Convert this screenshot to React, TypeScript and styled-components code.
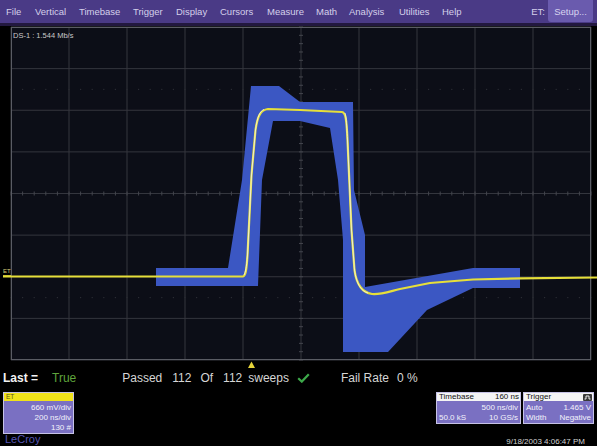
import styled, { createGlobalStyle } from "styled-components";

const GlobalStyle = createGlobalStyle`
  html, body {
    margin: 0;
    padding: 0;
    background: #000;
  }
  body {
    font-family: "Liberation Sans", Arial, sans-serif;
  }
`;

const menuItems = [
  { txt: "File", w: 29 },
  { txt: "Vertical", w: 44 },
  { txt: "Timebase", w: 54 },
  { txt: "Trigger", w: 43 },
  { txt: "Display", w: 44 },
  { txt: "Cursors", w: 47 },
  { txt: "Measure", w: 49 },
  { txt: "Math", w: 33 },
  { txt: "Analysis", w: 50 },
  { txt: "Utilities", w: 43 },
  { txt: "Help", w: 40 },
];

// grid geometry in screen coordinates
const GX0 = 11;
const GX1 = 591;
const GY0 = 27;
const GY1 = 360;
const DX = (GX1 - GX0) / 10;
const DY = (GY1 - GY0) / 8;
const CX = GX0 + DX * 5;
const CY = GY0 + DY * 4;

const MASK =
  "M156,268 L228,268 L242,180 L251,86 L279,86 L300,102 L353,102 L354,190 L365,235 L365,287 " +
  "L473,268 L520,268 L520,288 L473,288 L427,310 L388,352 L343,352 L343,240 L338,180 L330,128 " +
  "L300,121 L273,121 L262,180 L258,286 L156,286 Z";

const TRACE =
  "M3,276.5 L243,276.3 C245.5,276 246.5,271 247.5,255 L251.5,175 L255.5,130 " +
  "C257.5,116 260.5,110 268,109 L300,110 L342,112 C345.5,112.5 346.5,118 347.5,140 " +
  "L351.5,230 L354.5,270 C356.5,285 362,292.5 372,294 C379,295 386,292.5 400,289 " +
  "L430,283 L473,279.5 L520,278.3 L597,277.5";

const EDGES =
  "M244,275 C245.5,272 246.5,268 247.5,255 L251.5,175 L255.5,130 C257.5,116 260,111 264,109.5 " +
  "M345,113 C346,116 346.5,121 347.5,140 L351.5,230 L354.5,270 C356.5,284 361,291 368,293";

function Scope() {
  const vLines = Array.from({ length: 11 }, (_, i) => GX0 + DX * i);
  const hLines = Array.from({ length: 9 }, (_, i) => GY0 + DY * i);
  const xTicks = Array.from({ length: 51 }, (_, i) => GX0 + (DX / 5) * i);
  const yTicks = Array.from({ length: 41 }, (_, i) => GY0 + (DY / 5) * i);
  const dotRows = [GY0 + DY * 1.5, GY0 + DY * 6.5];
  return (
    <ScopeSvg viewBox="0 26 597 344" width={597} height={344}>
      <rect x={GX0} y={GY0} width={GX1 - GX0} height={GY1 - GY0} fill="#0c0e17" />
      {vLines.map((x) => (
        <line key={`v${x}`} x1={x} y1={GY0} x2={x} y2={GY1} stroke="#34363e" strokeWidth={1} />
      ))}
      {hLines.map((y) => (
        <line key={`h${y}`} x1={GX0} y1={y} x2={GX1} y2={y} stroke="#34363e" strokeWidth={1} />
      ))}
      {dotRows.map((y) =>
        xTicks.map((x) => (
          <rect key={`d${y}-${x}`} x={x - 0.6} y={y - 0.6} width={1.2} height={1.2} fill="#2a2c33" />
        ))
      )}
      {xTicks.map((x) => (
        <line key={`tx${x}`} x1={x} y1={CY - 2} x2={x} y2={CY + 2} stroke="#44464e" />
      ))}
      {yTicks.map((y) => (
        <line key={`ty${y}`} x1={CX - 2} y1={y} x2={CX + 2} y2={y} stroke="#44464e" />
      ))}
      <rect
        x={GX0 + 0.5}
        y={GY0 + 0.5}
        width={GX1 - GX0 - 1}
        height={GY1 - GY0 - 1}
        fill="none"
        stroke="#5a5c64"
      />
      <path d={MASK} fill="#3b57c3" />
      <path d={TRACE} fill="none" stroke="#e6df3a" strokeWidth={2.2} strokeLinejoin="round" />
      <path d={EDGES} fill="none" stroke="#f4f2e0" strokeWidth={0.9} />
      <text x={3} y={273} fontSize={6} fill="#d9cf7a" fontFamily="Liberation Sans, sans-serif">
        ET
      </text>
      <line x1={3} y1={276} x2={11} y2={276} stroke="#e6df3a" strokeWidth={1.5} />
      <polygon points="248,368 251.5,361.5 255,368" fill="#e6d43a" />
    </ScopeSvg>
  );
}

export default function App() {
  return (
    <Page>
      <GlobalStyle />
      <MenuBar>
        {menuItems.map(({ txt, w }) => (
          <MenuItem key={txt} $w={w}>
            {txt}
          </MenuItem>
        ))}
        <Spacer />
        <MenuLabel>ET:</MenuLabel>
        <SetupBtn>Setup...</SetupBtn>
      </MenuBar>

      <ScopeArea>
        <Scope />
        <ChannelLabel>DS-1 : 1.544 Mb/s</ChannelLabel>
      </ScopeArea>

      <StatusRow>
        <StatusLabel>Last =</StatusLabel>
        <StatusTxt $ml={14} $color="#5fa43c">
          True
        </StatusTxt>
        <StatusTxt $ml={46}>Passed</StatusTxt>
        <StatusTxt $ml={10}>112</StatusTxt>
        <StatusTxt $ml={9}>Of</StatusTxt>
        <StatusTxt $ml={10}>112</StatusTxt>
        <StatusTxt $ml={6}>sweeps</StatusTxt>
        <CheckIcon viewBox="0 0 13 10" width={13} height={10}>
          <path d="M1.2 5.2 L4.8 8.6 L11.8 1.2" fill="none" stroke="#3da94a" strokeWidth={2.2} />
        </CheckIcon>
        <StatusTxt $ml={31}>Fail Rate</StatusTxt>
        <StatusTxt $ml={8}>0 %</StatusTxt>
      </StatusRow>

      <BottomArea>
        <LeftCol>
          <InfoBox $w={71}>
            <ChannelHeader>ET</ChannelHeader>
            <BoxBody>
              <BoxLine $right>660 mV/div</BoxLine>
              <BoxLine $right>200 ns/div</BoxLine>
              <BoxLine $right>130 #</BoxLine>
            </BoxBody>
          </InfoBox>
          <Brand>LeCroy</Brand>
        </LeftCol>
        <RightCol>
          <BoxRow>
            <InfoBox $w={85}>
              <BoxHeader>
                <span>Timebase</span>
                <span>160 ns</span>
              </BoxHeader>
              <BoxBody>
                <BoxLine $right>500 ns/div</BoxLine>
                <BoxLine>
                  <span>50.0 kS</span>
                  <span>10 GS/s</span>
                </BoxLine>
              </BoxBody>
            </InfoBox>
            <InfoBox $w={71}>
              <BoxHeader>
                <span>Trigger</span>
                <svg width={9} height={7} viewBox="0 0 9 7">
                  <rect x={0} y={0} width={9} height={7} rx={1} fill="#3a3a3a" />
                  <path d="M1.5 5 L3 5 L3 2 L6 2 L6 5 L7.5 5" fill="none" stroke="#fff" strokeWidth={0.9} />
                </svg>
              </BoxHeader>
              <BoxBody>
                <BoxLine>
                  <span>Auto</span>
                  <span>1.465 V</span>
                </BoxLine>
                <BoxLine>
                  <span>Width</span>
                  <span>Negative</span>
                </BoxLine>
              </BoxBody>
            </InfoBox>
          </BoxRow>
          <DateTxt>9/18/2003 4:06:47 PM</DateTxt>
        </RightCol>
      </BottomArea>
    </Page>
  );
}

const Page = styled.div`
  width: 597px;
  height: 446px;
  background: #000;
  display: flex;
  flex-direction: column;
  overflow: hidden;
`;

const MenuBar = styled.div`
  height: 23px;
  flex-shrink: 0;
  display: flex;
  align-items: center;
  padding-left: 6px;
  background: #4a3a86;
  border-bottom: 3px solid #22183f;
`;

const MenuItem = styled.div<{ $w: number }>`
  width: ${({ $w }) => $w}px;
  flex-shrink: 0;
  font-size: 9.5px;
  color: #d4d0ea;
  white-space: nowrap;
`;

const Spacer = styled.div`
  flex: 1;
`;

const MenuLabel = styled.div`
  font-size: 9.5px;
  color: #d4d0ea;
  margin-right: 3px;
`;

const SetupBtn = styled.div`
  align-self: flex-start;
  width: 45px;
  height: 22px;
  margin-right: 4px;
  border-radius: 0 0 3px 3px;
  background: #6a5bae;
  color: #d8d4f0;
  font-size: 9.5px;
  display: flex;
  align-items: center;
  justify-content: center;
`;

const ScopeArea = styled.div`
  position: relative;
  height: 344px;
  flex-shrink: 0;
`;

const ScopeSvg = styled.svg`
  display: block;
`;

const ChannelLabel = styled.div`
  position: absolute;
  left: 13px;
  top: 5px;
  font-size: 7.5px;
  color: #c9c9c9;
  white-space: pre;
`;

const StatusRow = styled.div`
  height: 16px;
  flex-shrink: 0;
  display: flex;
  align-items: center;
  padding-left: 3px;
  font-size: 12px;
  line-height: 16px;
`;

const StatusLabel = styled.span`
  font-weight: bold;
  color: #f2f2f2;
`;

const StatusTxt = styled.span<{ $ml: number; $color?: string }>`
  margin-left: ${({ $ml }) => $ml}px;
  color: ${({ $color }) => $color ?? "#d6d6d6"};
  white-space: pre;
`;

const CheckIcon = styled.svg`
  margin-left: 8px;
  display: block;
`;

const BottomArea = styled.div`
  flex: 1;
  display: flex;
  justify-content: space-between;
`;

const LeftCol = styled.div`
  display: flex;
  flex-direction: column;
  padding: 6px 0 0 3px;
`;

const RightCol = styled.div`
  display: flex;
  flex-direction: column;
  align-items: flex-end;
  padding: 6px 3px 0 0;
`;

const BoxRow = styled.div`
  display: flex;
  gap: 2px;
`;

const InfoBox = styled.div<{ $w: number }>`
  width: ${({ $w }) => $w}px;
  box-sizing: border-box;
  border: 1px solid #c6c2e6;
  background: #7a70c2;
  font-size: 8px;
`;

const ChannelHeader = styled.div`
  height: 8px;
  background: #f0e21a;
  color: #5a5020;
  font-size: 6.5px;
  line-height: 8px;
  padding-left: 2px;
`;

const BoxHeader = styled.div`
  height: 8px;
  background: #f4f4f4;
  color: #111;
  line-height: 8px;
  display: flex;
  justify-content: space-between;
  align-items: center;
  padding: 0 1px 0 2px;
`;

const BoxBody = styled.div`
  padding: 2px 2px 0 2px;
`;

const BoxLine = styled.div<{ $right?: boolean }>`
  height: 10px;
  line-height: 10px;
  color: #f2f2fb;
  display: flex;
  justify-content: ${({ $right }) => ($right ? "flex-end" : "space-between")};
  white-space: nowrap;
`;

const Brand = styled.div`
  margin-top: 0;
  padding-left: 2px;
  font-size: 11px;
  line-height: 11px;
  color: #5656b4;
`;

const DateTxt = styled.div`
  margin-top: 13px;
  margin-right: 9px;
  font-size: 8px;
  line-height: 10px;
  color: #d2d2d2;
`;
